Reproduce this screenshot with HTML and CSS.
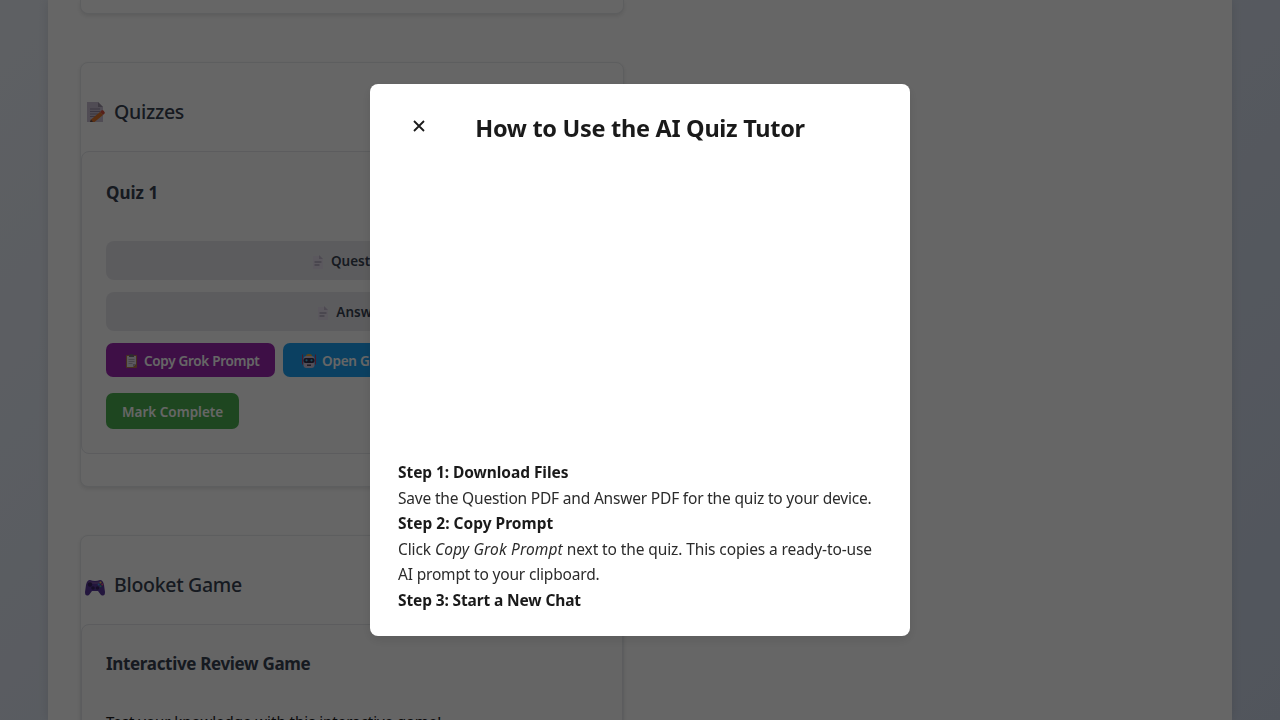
FILE: index.html
```html
<!DOCTYPE html>
<html lang="en">
<head>
<meta charset="utf-8">
<title>AI Quiz Tutor</title>
<link rel="stylesheet" href="styles.css">
</head>
<body>
<main class="page">
  <section class="card card-previous"></section>
  <section class="card card-quizzes">
    <h2 class="card-title">
      <svg class="title-icon" viewBox="0 0 22 22"><path d="M3 1h11l5 5v15H3z" fill="#c9bfd2"/><path d="M14 1v5h5z" fill="#9c92a6"/><path d="M6 8h10M6 10.500h10M6 13h8M6 15.500h6" stroke="#9186a0" stroke-width="1"/><path d="M7 18.500 16 11l3 3-8.500 7L6 21z" fill="#e0762c"/><path d="m16 11 2-2q2 0 3 3l-2 2z" fill="#d9503c"/><path d="m6 21 1-2.500 2 2.500z" fill="#5e4b50"/></svg>
      <span class="quizzes-label">Quizzes</span>
    </h2>
    <article class="panel quiz">
      <h3 class="panel-title quiz-name">Quiz 1</h3>
      <div class="files">
        <div class="file"><svg class="file-icon" viewBox="0 0 14 14"><path d="M2 1h7l3 3v10H2z" fill="#e4ddea"/><path d="M8 0v4h4z" fill="#c2bacd"/><path d="M3.500 7h7M3.500 10h5" stroke="#aca3b9" stroke-width="1.600"/></svg><span>Question</span></div>
        <div class="file"><svg class="file-icon" viewBox="0 0 14 14"><path d="M2 1h7l3 3v10H2z" fill="#e4ddea"/><path d="M8 0v4h4z" fill="#c2bacd"/><path d="M3.500 7h7M3.500 10h5" stroke="#aca3b9" stroke-width="1.600"/></svg><span>Answer</span></div>
      </div>
      <div class="actions">
        <button class="btn copy"><svg class="btn-icon" viewBox="0 0 16 16"><rect x="3" y="2" width="11" height="13" rx="1" fill="#b77b4b"/><path d="M4 3h9v8l-3 3H4z" fill="#e3dce9"/><path d="M10 14v-3h3z" fill="#aaa1b8"/><path d="M6 3q0-2 2.500-2T11 3v1H6z" fill="#716b78"/><path d="M5.500 6.500h6M5.500 8.500h6M5.500 10.500h4" stroke="#a69cad" stroke-width=".8"/></svg><span>Copy Grok Prompt</span></button>
        <button class="btn open"><svg class="btn-icon" viewBox="0 0 16 16"><path d="M1.500 1.500v10M14.500 1.500v10" stroke="#c43c62" stroke-width="1"/><path d="M5 3q0-2 3-2t3 2z" fill="#f1a62c"/><rect x="2.500" y="3" width="11" height="12" rx="3" fill="#cfc4dc"/><rect x="2.500" y="5" width="11" height="5" rx="2" fill="#302d49"/><circle cx="5.500" cy="7.300" r="1.100" fill="#52b9e7"/><circle cx="10.500" cy="7.300" r="1.100" fill="#52b9e7"/><rect x="6" y="11.500" width="4" height="1.400" fill="#433a52"/></svg><span>Open Grok</span></button>
      </div>
      <button class="btn complete"><span>Mark Complete</span></button>
    </article>
  </section>
  <section class="card card-game">
    <h2 class="card-title">
      <svg class="title-icon game-icon" viewBox="0 0 22 22"><path d="M6 4q5 2 10 0 3 0 4 5l1 7q0 5-4 3l-3-4H8l-3 4q-4 2-4-3L2 9q1-5 4-5z" fill="#59399b"/><path d="M5 5q6 2 12 0l1 2q-7 2-14 0z" fill="#7953a5"/><circle cx="6" cy="8.500" r="2.200" fill="#37245f"/><circle cx="9" cy="12" r="1.800" fill="#37245f"/><circle cx="13.500" cy="12" r="1.800" fill="#37245f"/><circle cx="16.500" cy="6.500" r="1" fill="#e9c64b"/><circle cx="18.300" cy="8.500" r="1" fill="#e65570"/><circle cx="14.700" cy="8.500" r="1" fill="#3d9bd8"/><circle cx="16.500" cy="10.300" r="1" fill="#37b68e"/></svg>
      <span class="blooket-label">Blooket Game</span>
    </h2>
    <article class="panel game">
      <h3 class="panel-title game-name">Interactive Review Game</h3>
      <p class="description">Test your knowledge with this interactive game!</p>
    </article>
  </section>
</main>
<div class="overlay">
  <div class="modal" role="dialog" aria-modal="true">
    <header class="modal-head">
      <button class="close" aria-label="Close"><svg viewBox="0 0 12 12"><path d="m1 1 10 10M11 1 1 11" fill="none" stroke="#1a1a1a" stroke-width="1.800"/></svg></button>
      <h2 class="modal-title">How to Use the AI Quiz Tutor</h2>
    </header>
    <div class="video"></div>
    <div class="steps">
      <div><strong class="s1">Step 1: Download Files</strong></div>
      <div class="t1">Save the Question PDF and Answer PDF for the quiz to your device.</div>
      <div><strong class="s2">Step 2: Copy Prompt</strong></div>
      <div class="t2">Click <em>Copy Grok Prompt</em> next to the quiz. This copies a ready-to-use</div>
      <div class="t3">AI prompt to your clipboard.</div>
      <div><strong class="s3">Step 3: Start a New Chat</strong></div>
    </div>
  </div>
</div>
</body>
</html>
```
FILE: styles.css
```css
* { box-sizing: border-box; }
body {
  margin: 0;
  height: 720px;
  overflow: hidden;
  font: 16px/1.6 "Noto Sans", "Open Sans", sans-serif;
  color: #1a1a1a;
  background: linear-gradient(135deg, #ebf0f8, #cbd5e7);
}
h2, h3, p { margin: 0; }
button { border: 0; font-family: inherit; }
svg { display: block; flex: none; }
.page {
  width: 1184px;
  height: 720px;
  margin: 0 auto;
  padding: 0 32px;
  background: #fff;
  box-shadow: 0 0 10px rgba(0, 0, 0, .1);
  overflow: hidden;
}
.card {
  width: 544px;
  border: 1px solid #e8eaed;
  border-radius: 8px;
  background: #fff;
  box-shadow: 0 2px 4px rgba(0, 0, 0, .1);
}
.card-previous { height: 14px; border-top: 0; border-radius: 0 0 8px 8px; }
.card-quizzes { height: 425px; margin-top: 48px; }
.card-game { height: 300px; margin-top: 48px; }
.card-title {
  display: flex;
  align-items: center;
  height: 88px;
  padding: 10px 3px 0;
  gap: 8px;
  font-size: 19.500px;
  letter-spacing: -.3px;
  font-weight: 500;
  color: #374151;
}
.title-icon { width: 22px; height: 22px; }
.game-icon { margin-top: 3px; }
.panel {
  border: 1px solid #e5e7eb;
  border-radius: 8px;
  padding: 27px 24px 0;
  background: #fcfcfd;
}
.quiz { height: 303px; }
.game { height: 212px; padding-top: 25px; }
.panel-title { height: 28px; font-size: 17px; line-height: 28px; font-weight: 700; color: #374151; }
.game-name { letter-spacing: -.33px; }
.files { display: grid; gap: 12px; margin-top: 34px; }
.file {
  display: flex;
  align-items: center;
  justify-content: center;
  gap: 6px;
  height: 39px;
  padding: 2px 2px 0 0;
  border-radius: 8px;
  background: #e7e7eb;
  color: #374151;
  font-size: 13.500px;
  font-weight: 600;
}
.file-icon { width: 14px; height: 14px; }
.actions { display: flex; gap: 8px; margin-top: 12px; }
.btn {
  display: flex;
  align-items: center;
  gap: 5px;
  border-radius: 7px;
  color: #fff;
  font-size: 13.500px;
  font-weight: 600;
  white-space: nowrap;
  padding: 2px 0 0 17px;
}
.btn-icon { width: 16px; height: 16px; }
.copy { width: 169px; height: 34px; background: #9c27b0; letter-spacing: -.3px; }
.open { width: 130px; height: 34px; padding-left: 18px; background: #1da1f2; letter-spacing: -.2px; }
.complete { width: 133px; height: 36px; margin-top: 16px; padding-left: 16px; background: #4caf50; }
.description { margin-top: 31px; font-size: 15px; line-height: 24px; }
.overlay {
  position: fixed;
  inset: 0;
  display: flex;
  align-items: center;
  justify-content: center;
  background: rgba(0, 0, 0, .6);
}
.modal {
  width: 540px;
  height: 552px;
  padding: 24px 28px;
  border-radius: 8px;
  background: #fff;
  box-shadow: 0 4px 12px rgba(0, 0, 0, .1);
  overflow: hidden;
}
.modal-head { display: grid; grid-template-columns: 42px 400px 42px; }
.close { height: 36px; padding: 0 0 0 15px; background: none; }
.close svg { width: 12px; height: 12px; }
.modal-title { text-align: center; font-size: 23.500px; line-height: 41px; font-weight: 700; letter-spacing: -.3px; white-space: nowrap; }
.video { height: 311px; }
.steps { white-space: nowrap; font-size: 15.500px; line-height: 25.600px; }
.steps strong { font-weight: 700; }
.t1, .t2, .t3 { color: #2b2b2b; }
.s1 { letter-spacing: -.07px; }
.s3 { letter-spacing: -.13px; }
.t1 { letter-spacing: -.19px; }
.t2 { letter-spacing: -.11px; }
.t2 em { letter-spacing: .15px; }
.t3 { letter-spacing: -.18px; }
```
